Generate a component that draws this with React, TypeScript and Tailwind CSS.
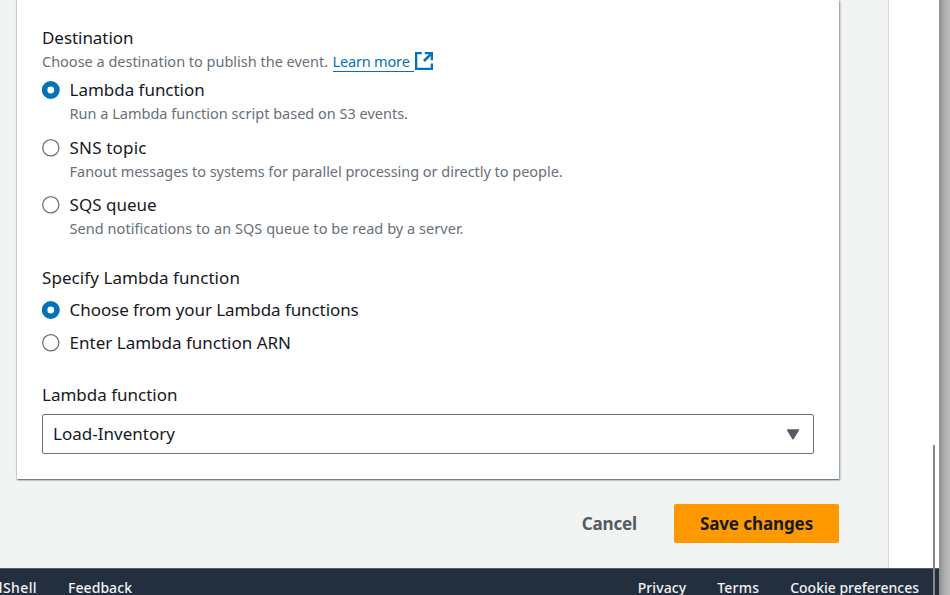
import type { ReactNode } from "react";

function Radio({ checked = false }: { checked?: boolean }) {
  return (
    <svg className="size-[18px] shrink-0" viewBox="0 0 18 18">
      {checked ? (
        <circle cx="8.8" cy="9" r="6.2" fill="#fff" stroke="#0073bb" strokeWidth="5.6" />
      ) : (
        <circle cx="8.8" cy="8.8" r="8.1" fill="#fff" stroke="#687078" strokeWidth="1.3" />
      )}
    </svg>
  );
}

function Option({
  label,
  labelClass = "",
  description,
  descriptionClass = "",
  checked,
}: {
  label: string;
  labelClass?: string;
  description?: string;
  descriptionClass?: string;
  checked?: boolean;
}) {
  return (
    <div>
      <div className="flex h-6 items-center gap-[9.6px]">
        <Radio checked={checked} />
        <span className={`whitespace-nowrap ${labelClass}`}>{label}</span>
      </div>
      {description && (
        <p className={`ml-[27.6px] h-6 whitespace-nowrap text-[14.5px] leading-[22px] text-[#687078] ${descriptionClass}`}>
          {description}
        </p>
      )}
    </div>
  );
}

function FieldLabel({ children, className = "" }: { children: ReactNode; className?: string }) {
  return <h3 className={`h-6 whitespace-nowrap ${className}`}>{children}</h3>;
}

function ExternalIcon() {
  return (
    <svg className="-mt-[2px] ml-px size-[18px] shrink-0" viewBox="0 0 18 18" fill="none" stroke="#0073bb" strokeWidth="2.3">
      <path d="M6.8 1.15H1.15v15.7h15.7v-5.4M9.8 1.15h7.05v7.05" />
      <path d="M16.4 1.6L9 9" strokeWidth="2.6" />
    </svg>
  );
}

export default function App() {
  return (
    <div className="flex h-[595px] w-[950px] overflow-hidden bg-white font-['Noto_Sans','Open_Sans',sans-serif] text-[17px] leading-6 text-[#16191f]">
      <div className="relative flex w-[939px] flex-col">
        <div className="flex h-[568px]">
          <main className="w-[889px] border-r border-[#d5dbdb] bg-[#f2f3f3] pl-[17px]">
            <section className="h-[479px] w-[822px] bg-white px-[25px] pt-[26px] shadow-[0_1px_1px_0_rgba(0,28,36,0.3),1px_1px_2px_0_rgba(0,28,36,0.45),-1px_0_1px_0_rgba(0,28,36,0.1)]">
              <FieldLabel className="tracking-[-0.05px]">Destination</FieldLabel>
              <div className="flex h-6 items-center whitespace-nowrap text-[14.5px] text-[#687078]">
                <span className="h-6 w-[290.5px] leading-[22px] tracking-[-0.01px]">
                  Choose a destination to publish the event.
                </span>
                <a className="-mt-px h-[21px] w-[81px] border-b border-[#0073bb] leading-[21px] tracking-[-0.17px] text-[#0073bb]">
                  Learn more
                </a>
                <ExternalIcon />
              </div>
              <div className="mt-1 flex flex-col">
                <Option
                  checked
                  label="Lambda function"
                  labelClass="tracking-[-0.03px]"
                  description="Run a Lambda function script based on S3 events."
                />
                <div className="mt-[10px]">
                  <Option
                    label="SNS topic"
                    labelClass="tracking-[0.17px]"
                    description="Fanout messages to systems for parallel processing or directly to people."
                    descriptionClass="tracking-[-0.035px]"
                  />
                </div>
                <div className="mt-[9px]">
                  <Option
                    label="SQS queue"
                    description="Send notifications to an SQS queue to be read by a server."
                    descriptionClass="tracking-[0.04px]"
                  />
                </div>
              </div>
              <div className="mt-[25px]">
                <FieldLabel className="tracking-[0.07px]">Specify Lambda function</FieldLabel>
                <div className="mt-2 flex flex-col gap-[9px]">
                  <Option checked label="Choose from your Lambda functions" labelClass="tracking-[-0.08px]" />
                  <Option label="Enter Lambda function ARN" />
                </div>
              </div>
              <div className="mt-7">
                <FieldLabel>Lambda function</FieldLabel>
                <div className="mt-[7px] flex h-10 items-center justify-between rounded-[2px] border border-[#687078] pl-[10px] pr-[13px]">
                  <span className="tracking-[0.02px]">Load-Inventory</span>
                  <svg className="h-[11px] w-[14px]" viewBox="0 0 14 11">
                    <path d="M1.5 1h11L7 9.8z" fill="#545b64" stroke="#545b64" strokeWidth="1.4" strokeLinejoin="round" />
                  </svg>
                </div>
              </div>
            </section>
            <div className="mt-[25px] flex h-[39px] w-[822px] items-center justify-end gap-[37px] font-bold">
              <button className="tracking-[-0.15px] text-[#545b64]">Cancel</button>
              <button className="h-[39px] w-[165px] rounded-[2px] bg-[#ff9900] tracking-[-0.09px] text-[#16191f]">
                Save changes
              </button>
            </div>
          </main>
        </div>
        <footer className="flex h-[27px] border-t border-[#545b64] bg-[#232f3e] pt-[7px] text-[14px] leading-5 font-medium text-[#f2f3f3]">
          <div className="-mt-px flex w-[37px] shrink-0 justify-end overflow-hidden leading-[26px]">
            <span className="tracking-[0.4px]">CloudShell</span>
          </div>
          <span className="-mt-px ml-[31px] leading-[26px] tracking-[0.06px]">Feedback</span>
          <div className="-mt-px ml-auto flex gap-[31px] pr-[20px] leading-[26px] whitespace-nowrap">
            <span className="tracking-[0.09px]">Privacy</span>
            <span className="tracking-[0.2px]">Terms</span>
            <span>Cookie preferences</span>
          </div>
        </footer>
        <div className="absolute top-[445px] left-[933px] h-[150px] w-[2px] bg-[#868686]" />
      </div>
      <div className="w-[11px] bg-linear-to-r from-[#8d8d8d] via-[#adadad] to-[#bcbcbc]" />
    </div>
  );
}
